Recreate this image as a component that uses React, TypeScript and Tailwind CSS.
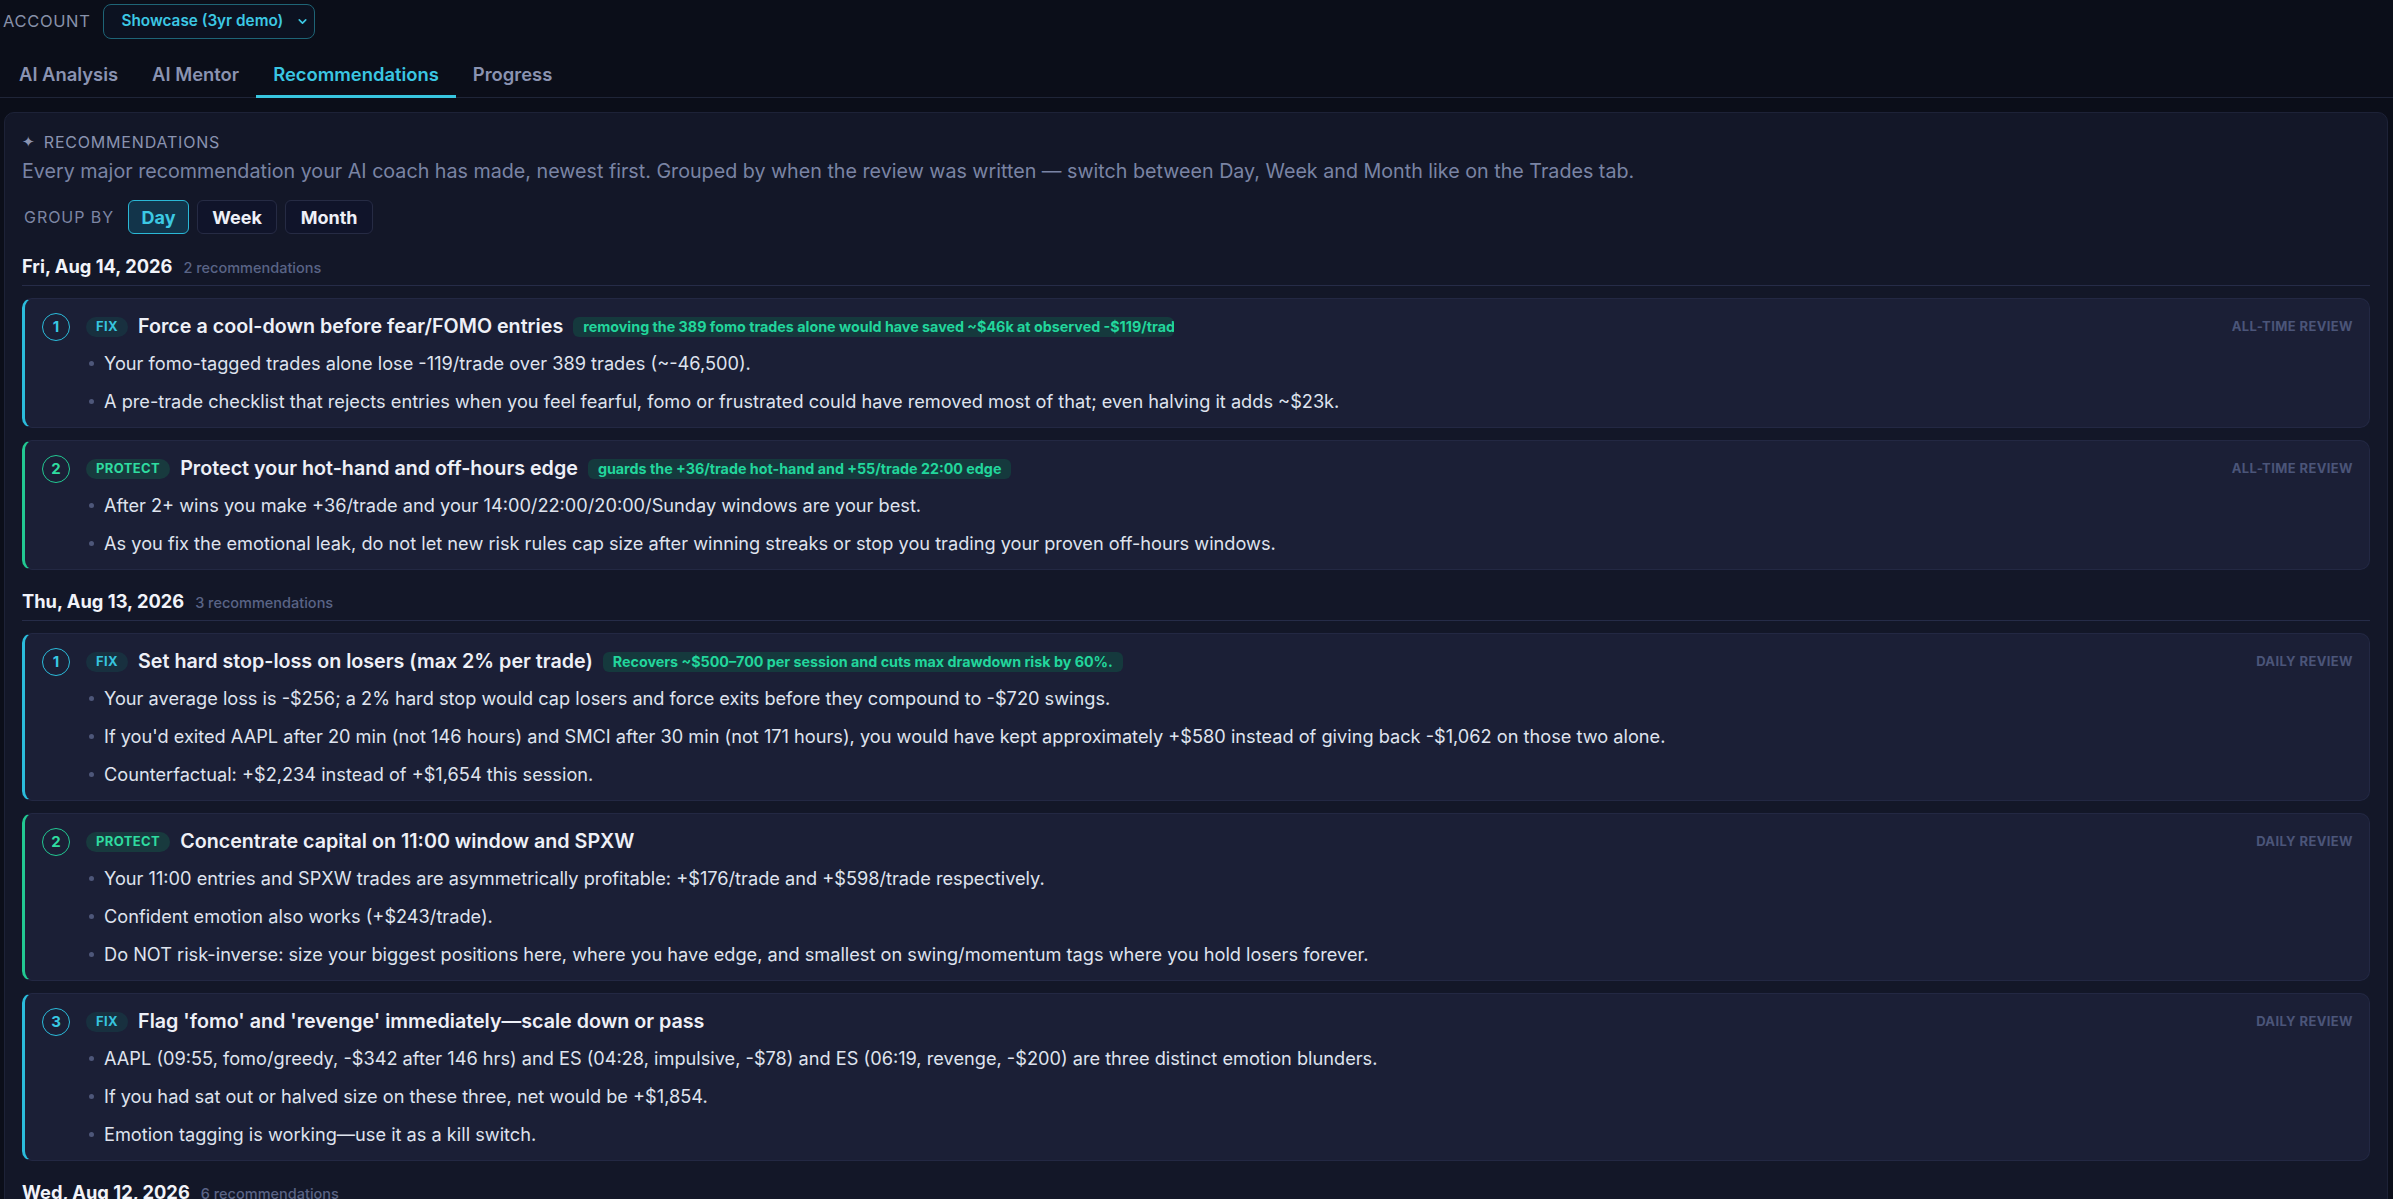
import React from "react";
import { ChevronDown } from "lucide-react";

type Kind = "fix" | "protect";

type Rec = {
  kind: Kind;
  title: string;
  impact?: string;
  source: string;
  points: string[];
};

type Group = {
  date: string;
  recs: Rec[];
  count: number;
};

const groups: Group[] = [
  {
    date: "Fri, Aug 14, 2026",
    count: 2,
    recs: [
      {
        kind: "fix",
        title: "Force a cool-down before fear/FOMO entries",
        impact: "removing the 389 fomo trades alone would have saved ~$46k at observed -$119/trade",
        source: "All-time review",
        points: [
          "Your fomo-tagged trades alone lose -119/trade over 389 trades (~-46,500).",
          "A pre-trade checklist that rejects entries when you feel fearful, fomo or frustrated could have removed most of that; even halving it adds ~$23k.",
        ],
      },
      {
        kind: "protect",
        title: "Protect your hot-hand and off-hours edge",
        impact: "guards the +36/trade hot-hand and +55/trade 22:00 edge",
        source: "All-time review",
        points: [
          "After 2+ wins you make +36/trade and your 14:00/22:00/20:00/Sunday windows are your best.",
          "As you fix the emotional leak, do not let new risk rules cap size after winning streaks or stop you trading your proven off-hours windows.",
        ],
      },
    ],
  },
  {
    date: "Thu, Aug 13, 2026",
    count: 3,
    recs: [
      {
        kind: "fix",
        title: "Set hard stop-loss on losers (max 2% per trade)",
        impact: "Recovers ~$500–700 per session and cuts max drawdown risk by 60%.",
        source: "Daily review",
        points: [
          "Your average loss is -$256; a 2% hard stop would cap losers and force exits before they compound to -$720 swings.",
          "If you'd exited AAPL after 20 min (not 146 hours) and SMCI after 30 min (not 171 hours), you would have kept approximately +$580 instead of giving back -$1,062 on those two alone.",
          "Counterfactual: +$2,234 instead of +$1,654 this session.",
        ],
      },
      {
        kind: "protect",
        title: "Concentrate capital on 11:00 window and SPXW",
        source: "Daily review",
        points: [
          "Your 11:00 entries and SPXW trades are asymmetrically profitable: +$176/trade and +$598/trade respectively.",
          "Confident emotion also works (+$243/trade).",
          "Do NOT risk-inverse: size your biggest positions here, where you have edge, and smallest on swing/momentum tags where you hold losers forever.",
        ],
      },
      {
        kind: "fix",
        title: "Flag 'fomo' and 'revenge' immediately—scale down or pass",
        source: "Daily review",
        points: [
          "AAPL (09:55, fomo/greedy, -$342 after 146 hrs) and ES (04:28, impulsive, -$78) and ES (06:19, revenge, -$200) are three distinct emotion blunders.",
          "If you had sat out or halved size on these three, net would be +$1,854.",
          "Emotion tagging is working—use it as a kill switch.",
        ],
      },
    ],
  },
  {
    date: "Wed, Aug 12, 2026",
    count: 6,
    recs: [
      {
        kind: "fix",
        title: "Cut size after two consecutive losers",
        source: "Daily review",
        points: ["Back-to-back losses were followed by larger, faster entries."],
      },
    ],
  },
];

const tabs = ["AI Analysis", "AI Mentor", "Recommendations", "Progress"];

function RecCard({ rec, index }: { rec: Rec; index: number }) {
  const fix = rec.kind === "fix";
  return (
    <div
      className={`rounded-[10px] border border-[#232843] border-l-[3px] bg-[#1b1f36] pl-[17px] pr-[16px] pt-[14px] pb-[12px] ${
        fix ? "border-l-[#2bbcdb]" : "border-l-[#22c892]"
      }`}
    >
      <div className="flex gap-[16px]">
        <div
          className={`w-[28px] h-[28px] shrink-0 rounded-full border-[1.5px] flex items-center justify-center text-[15px] font-bold ${
            fix ? "border-[#2bbcdb] text-[#38c8e4]" : "border-[#22c892] text-[#2fdca0]"
          }`}
        >
          {index + 1}
        </div>
        <div className="flex-1 min-w-0">
          <div className="flex items-center h-[28px] gap-[10px]">
            <span
              className={`h-[20px] px-[10px] rounded-full flex items-center text-[13px] font-bold tracking-[0.03em] shrink-0 ${
                fix ? "bg-[#18303f] text-[#36c4de]" : "bg-[#183a3e] text-[#2fdca0]"
              }`}
            >
              {fix ? "FIX" : "PROTECT"}
            </span>
            <span className="text-[19.7px] font-semibold text-[#eef0f7] whitespace-nowrap">{rec.title}</span>
            {rec.impact && (
              <span className="h-[20px] max-w-[601px] overflow-hidden whitespace-nowrap rounded-[6px] bg-[#15393d] px-[10px] flex items-center text-[14.3px] font-bold text-[#22d69c]">
                {rec.impact}
              </span>
            )}
            <span className="ml-auto text-[13px] font-bold uppercase tracking-[0.03em] text-[#4b5579] whitespace-nowrap">
              {rec.source}
            </span>
          </div>
          <ul className="mt-[8px] flex flex-col gap-[10px]">
            {rec.points.map((p) => (
              <li key={p} className="flex items-center text-[18.2px] leading-[28px] text-[#dfe3ee]">
                <span className="w-[5px] h-[5px] rounded-full bg-[#4e577a] ml-[3px] mr-[10px] shrink-0" />
                {p}
              </li>
            ))}
          </ul>
        </div>
      </div>
    </div>
  );
}

export default function App() {
  return (
    <div className="h-[1199px] overflow-hidden bg-[#0b0e19] font-['Inter',sans-serif] text-[#e5e8f0]">
      <div className="flex items-center gap-[12px] pl-[3px] pt-[4px]">
        <span className="text-[16.5px] tracking-[0.04em] text-[#8891a9]">ACCOUNT</span>
        <div className="h-[35px] w-[212px] flex items-center justify-between pl-[18px] pr-[5px] rounded-[8px] border border-[#1e6476] bg-[#0c1221]">
          <span className="text-[15.3px] font-semibold text-[#3cc8e4] whitespace-nowrap">Showcase (3yr demo)</span>
          <ChevronDown className="w-[13px] h-[13px] text-[#3cc8e4] shrink-0" strokeWidth={3} />
        </div>
      </div>

      <div className="mt-[15px] flex border-b border-[#1f2538]">
        {tabs.map((t) => (
          <div
            key={t}
            className={`h-[44px] px-[17px] flex items-center text-[18.4px] font-semibold border-b-[3px] -mb-px ${
              t === "Recommendations" ? "border-[#38c6e0] text-[#3ac6e2]" : "border-transparent text-[#8a93b1]"
            } ${t === "AI Analysis" ? "ml-[2px]" : ""}`}
          >
            {t}
          </div>
        ))}
      </div>

      <div className="mt-[14px] ml-[4px] mr-[5px] rounded-[10px] border border-[#1d2237] bg-[#131728] px-[17px] pt-[18px] pb-[20px]">
        <div className="flex items-center gap-[8px] text-[16px] leading-[22px] tracking-[0.05em] text-[#8a93b0]">
          <span className="text-[15px]">✦</span>
          <span>RECOMMENDATIONS</span>
        </div>
        <p className="mt-[3px] text-[19.7px] leading-[30px] text-[#7a84a4]">
          Every major recommendation your AI coach has made, newest first. Grouped by when the review was written — switch between Day, Week and Month like on the Trades tab.
        </p>
        <div className="mt-[14px] flex items-center gap-[8px]">
          <span className="text-[16px] tracking-[0.06em] text-[#7d86a4] ml-[2px] mr-[6px]">GROUP BY</span>
          <button className="h-[34px] w-[61px] rounded-[6px] border border-[#2ab8d6] bg-[#12344a] text-[18px] font-bold text-[#3cc9e3]">
            Day
          </button>
          <button className="h-[34px] w-[80px] rounded-[6px] border border-[#262b44] bg-[#10142a] text-[18px] font-bold text-[#eef0f7]">
            Week
          </button>
          <button className="h-[34px] w-[88px] rounded-[6px] border border-[#262b44] bg-[#10142a] text-[18px] font-bold text-[#eef0f7]">
            Month
          </button>
        </div>

        <div className="mt-[19px] flex flex-col gap-[18px]">
          {groups.map((g) => (
            <div key={g.date}>
              <div className="flex items-baseline gap-[11px] h-[26px] pb-[6px] box-content border-b border-[#262c48]">
                <span className="text-[18.3px] leading-[26px] font-bold text-[#f1f3f9]">{g.date}</span>
                <span className="text-[14.5px] font-medium text-[#5a6486]">{g.count} recommendations</span>
              </div>
              <div className="mt-[12px] flex flex-col gap-[12px]">
                {g.recs.map((r, i) => (
                  <RecCard key={r.title} rec={r} index={i} />
                ))}
              </div>
            </div>
          ))}
        </div>
      </div>
    </div>
  );
}
